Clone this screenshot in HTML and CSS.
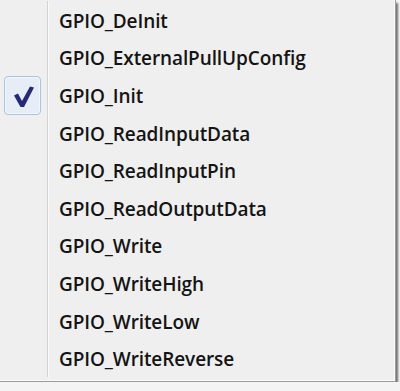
FILE: index.html
```html
<!DOCTYPE html>
<html>
<head>
<meta charset="utf-8">
<link rel="stylesheet" href="styles.css">
</head>
<body>
<div class="menu">
  <div class="row"><div class="gutter"></div><div class="label">GPIO_DeInit</div></div>
  <div class="row"><div class="gutter"></div><div class="label">GPIO_ExternalPullUpConfig</div></div>
  <div class="row"><div class="gutter">
    <div class="check">
      <svg width="37" height="39" viewBox="0 0 37 39"><path d="M10 19.5 L14 17.5 L18 25 L26 10.5 L30 11.5 L20 31 L16.5 31 Z" fill="#28287a"/></svg>
    </div>
  </div><div class="label">GPIO_Init</div></div>
  <div class="row"><div class="gutter"></div><div class="label">GPIO_ReadInputData</div></div>
  <div class="row"><div class="gutter"></div><div class="label">GPIO_ReadInputPin</div></div>
  <div class="row"><div class="gutter"></div><div class="label">GPIO_ReadOutputData</div></div>
  <div class="row"><div class="gutter"></div><div class="label">GPIO_Write</div></div>
  <div class="row"><div class="gutter"></div><div class="label">GPIO_WriteHigh</div></div>
  <div class="row"><div class="gutter"></div><div class="label">GPIO_WriteLow</div></div>
  <div class="row"><div class="gutter"></div><div class="label">GPIO_WriteReverse</div></div>
</div>
</body>
</html>
```
FILE: styles.css
```css
html, body {
  margin: 0;
  padding: 0;
  background: #f4f4f4;
}
.menu {
  width: 396px;
  height: 382px;
  box-sizing: border-box;
  padding-top: 1px;
  background: #efefef;
  border-right: 1px solid #9c9c9c;
  border-bottom: 1px solid #9c9c9c;
  box-shadow: inset -1px -1px 0 #fafafa, 2px 3px 2px rgba(0,0,0,0.55);
}
.row {
  display: flex;
  height: 37.6px;
}
.gutter {
  width: 47px;
  flex: none;
  border-right: 1px solid #d3d3d3;
  display: flex;
  align-items: center;
  justify-content: center;
}
.label {
  flex: 1;
  border-left: 1px solid #fbfbfb;
  padding-left: 10px;
  padding-top: 2px;
  display: flex;
  align-items: center;
  font-family: "Open Sans", sans-serif;
  font-weight: 600;
  font-size: 19px;
  letter-spacing: -0.1px;
  color: #141414;
}
.check {
  width: 37px;
  height: 39px;
  margin-right: 3px;
  margin-top: 2px;
  box-sizing: border-box;
  border: 1px solid #a9c3e6;
  border-radius: 4px;
  background: #e6edf7;
  box-shadow: inset 0 0 0 1px #f3f6fb;
  display: flex;
}
.check svg {
  margin: -1px;
}
```
